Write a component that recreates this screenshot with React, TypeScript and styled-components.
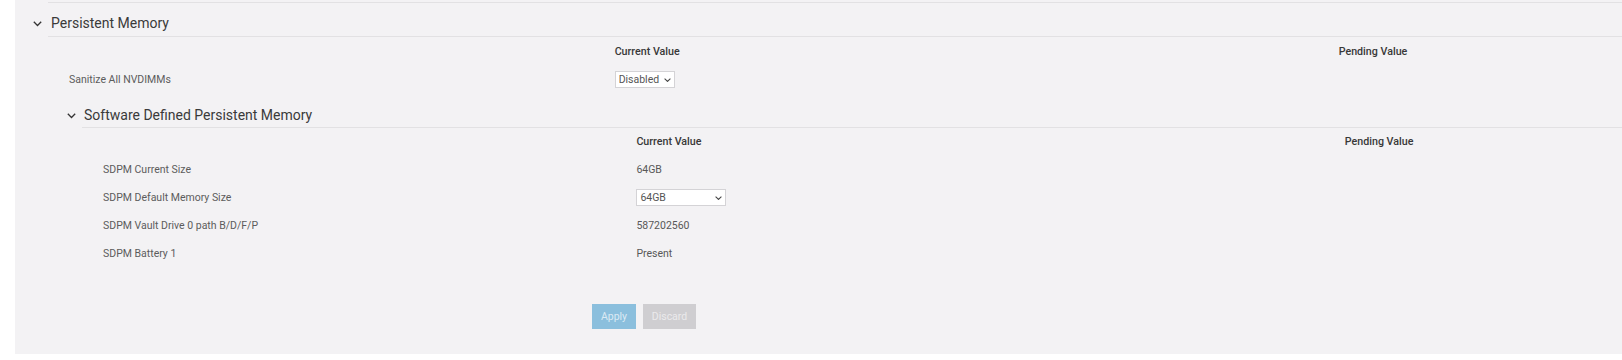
import React from 'react';
import styled, { createGlobalStyle } from 'styled-components';

const GlobalStyle = createGlobalStyle`
  body {
    margin: 0;
    background: #ffffff;
    font-family: Roboto, "Liberation Sans", sans-serif;
  }
`;

const Panel = styled.div`
  margin-left: 15px;
  background: #f3f2f4;
  padding: 2px 0 25px 15px;
`;

const TopRule = styled.div`
  margin-left: 18px;
  border-top: 1px solid #e2e1e3;
`;

const Section = styled.section<{ $nested?: boolean }>`
  padding-left: ${(p) => (p.$nested ? '16px' : '0')};
`;

const SectionHeader = styled.div<{ $nested?: boolean }>`
  display: flex;
  align-items: stretch;
  padding-top: ${(p) => (p.$nested ? '12px' : '10px')};
`;

const ChevronCell = styled.div`
  width: 18px;
  display: flex;
  align-items: center;
  justify-content: flex-start;
  padding-left: 3px;
  height: 22px;
  box-sizing: border-box;
`;

const Title = styled.h2<{ $nested?: boolean }>`
  flex: 1;
  margin: 0;
  padding: 0 0 ${(p) => (p.$nested ? '2px' : '3px')} ${(p) => (p.$nested ? '2px' : '3px')};
  font-size: 14px;
  line-height: 20px;
  font-weight: 400;
  color: #3a3a3a;
  border-bottom: 1px solid #e2e1e3;
`;

const SectionBody = styled.div`
  margin-left: 18px;
`;

const Row = styled.div<{ $h?: number }>`
  display: grid;
  grid-template-columns: 36% 46% 18%;
  align-items: center;
  height: ${(p) => p.$h ?? 28}px;
  font-size: 10.5px;
`;

const Label = styled.div`
  padding-left: 21px;
  color: #5c5c5c;
`;

const Value = styled.div`
  color: #585858;
`;

const ColHead = styled.div`
  color: #383838;
  font-weight: 500;
  font-size: 10.7px;
`;

const SelectWrap = styled.div<{ $w: number }>`
  position: relative;
  width: ${(p) => p.$w}px;
  height: 17px;
`;

const Select = styled.select`
  appearance: none;
  width: 100%;
  height: 100%;
  box-sizing: border-box;
  border: 1px solid #d4d3d6;
  border-radius: 0;
  background: #ffffff;
  color: #555555;
  font-family: Roboto, "Liberation Sans", sans-serif;
  font-size: 10.5px;
  padding: 0 0 0 3px;
  outline: none;
`;

const SelectArrow = styled.svg`
  position: absolute;
  right: 4px;
  top: 7px;
  pointer-events: none;
`;

const Buttons = styled.div`
  display: flex;
  gap: 7px;
  margin: 37px 0 0 544px;
`;

const Button = styled.button<{ $primary?: boolean }>`
  height: 25px;
  padding: 0;
  width: ${(p) => (p.$primary ? '44px' : '53px')};
  border: none;
  border-radius: 0;
  background: ${(p) => (p.$primary ? '#8bbfdd' : '#cfced1')};
  color: ${(p) => (p.$primary ? '#dbeaf4' : '#ebeaec')};
  font-family: Roboto, "Liberation Sans", sans-serif;
  font-size: 10.5px;
`;

function Chevron() {
  return (
    <svg width="9" height="6" viewBox="0 0 9 6">
      <path d="M0.8 0.8l3.7 3.7 3.7-3.7" fill="none" stroke="#333" strokeWidth="1.3" />
    </svg>
  );
}

function Dropdown({ width, value }: { width: number; value: string }) {
  return (
    <SelectWrap $w={width}>
      <Select defaultValue={value}>
        <option>{value}</option>
      </Select>
      <SelectArrow width="7" height="4" viewBox="0 0 7 4">
        <path d="M0.6 0.6l2.9 2.8 2.9-2.8" fill="none" stroke="#444" strokeWidth="1.1" />
      </SelectArrow>
    </SelectWrap>
  );
}

const sdpmRows: { label: string; value: React.ReactNode }[] = [
  { label: 'SDPM Current Size', value: '64GB' },
  { label: 'SDPM Default Memory Size', value: <Dropdown width={90} value="64GB" /> },
  { label: 'SDPM Vault Drive 0 path B/D/F/P', value: '587202560' },
  { label: 'SDPM Battery 1', value: 'Present' },
];

export default function App() {
  return (
    <>
      <GlobalStyle />
      <Panel>
        <TopRule />
        <Section>
          <SectionHeader>
            <ChevronCell>
              <Chevron />
            </ChevronCell>
            <Title>Persistent Memory</Title>
          </SectionHeader>
          <SectionBody>
            <Row>
              <div />
              <ColHead>Current Value</ColHead>
              <ColHead>Pending Value</ColHead>
            </Row>
            <Row>
              <Label>Sanitize All NVDIMMs</Label>
              <Value>
                <Dropdown width={60} value="Disabled" />
              </Value>
              <div />
            </Row>
            <Section $nested>
              <SectionHeader $nested>
                <ChevronCell>
                  <Chevron />
                </ChevronCell>
                <Title $nested>Software Defined Persistent Memory</Title>
              </SectionHeader>
              <SectionBody>
                <Row $h={27}>
                  <div />
                  <ColHead>Current Value</ColHead>
                  <ColHead>Pending Value</ColHead>
                </Row>
                {sdpmRows.map((r) => (
                  <Row key={r.label}>
                    <Label>{r.label}</Label>
                    <Value>{r.value}</Value>
                    <div />
                  </Row>
                ))}
              </SectionBody>
            </Section>
            <Buttons>
              <Button $primary>Apply</Button>
              <Button>Discard</Button>
            </Buttons>
          </SectionBody>
        </Section>
      </Panel>
    </>
  );
}
